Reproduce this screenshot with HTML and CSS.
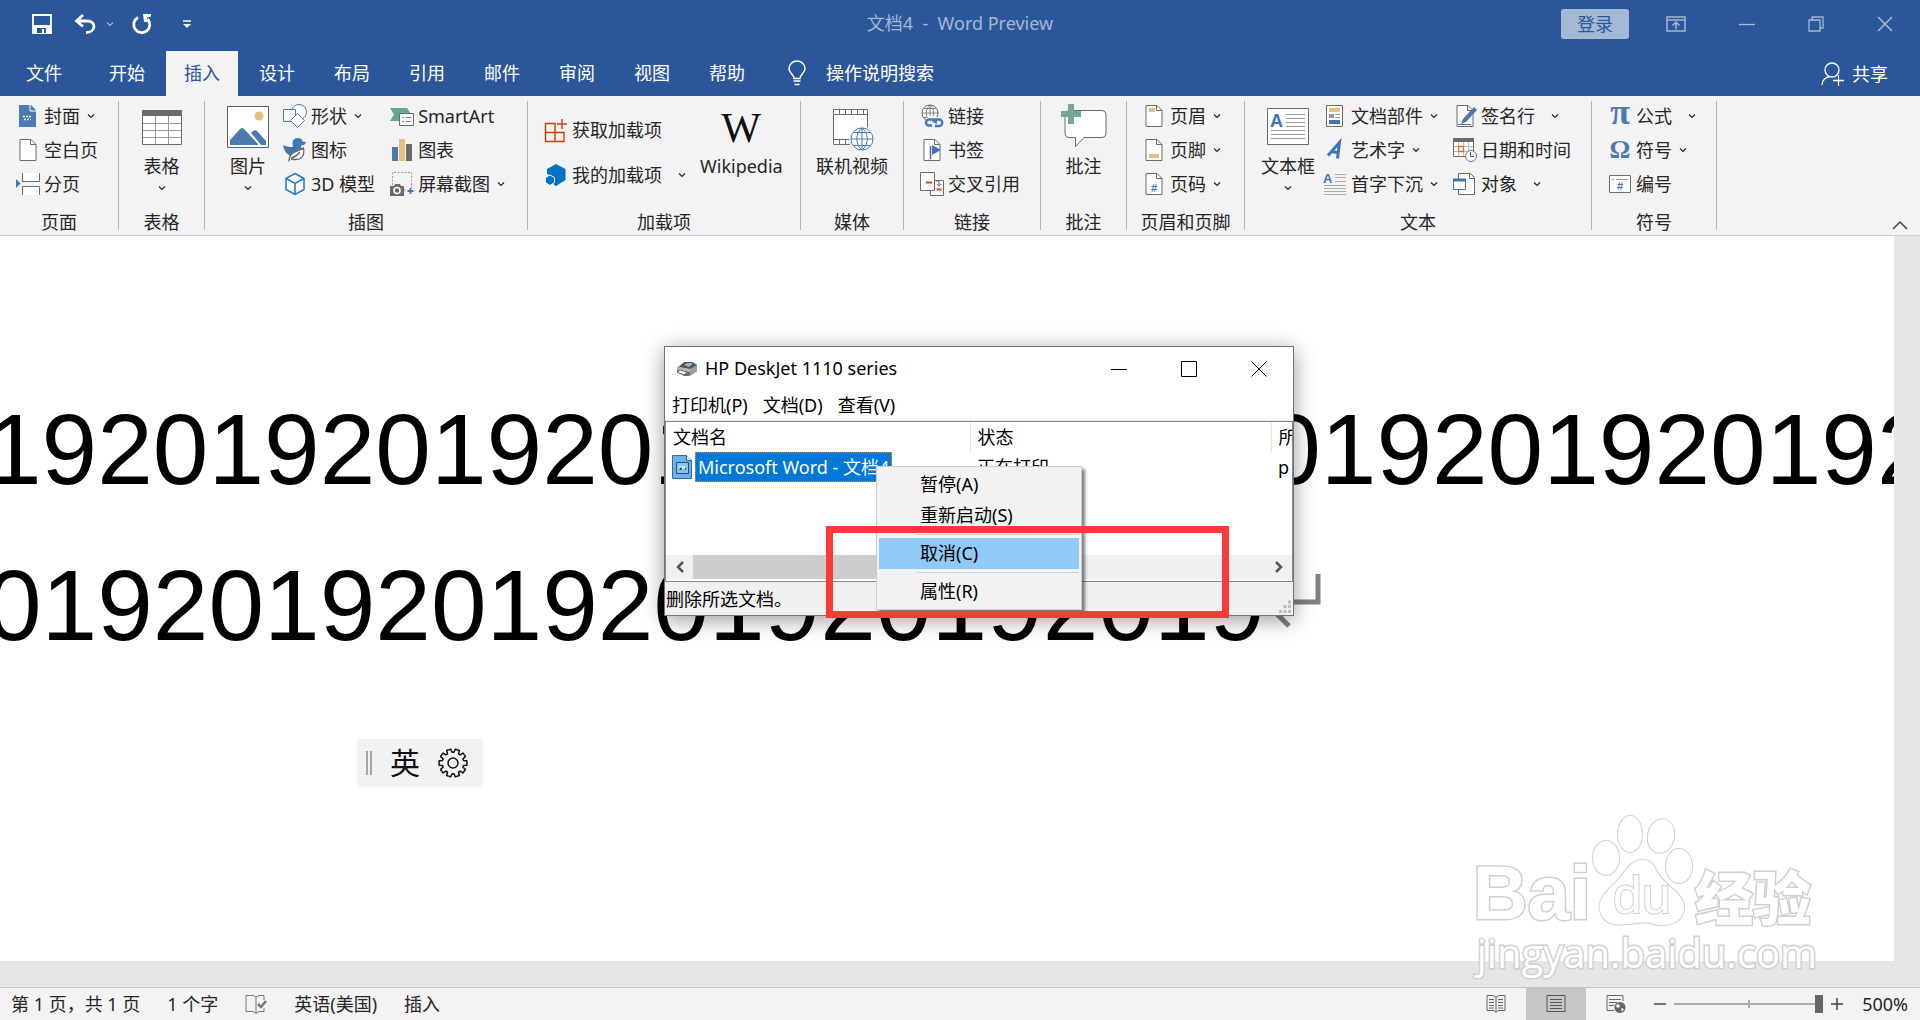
FILE: index.html
```html
<!DOCTYPE html>
<html lang="zh-CN">
<head>
    <meta charset="UTF-8">
    <meta name="viewport" content="width=device-width, initial-scale=1.0">
    <title>文档4 - Word Preview</title>
    <link rel="stylesheet" href="styles.css">
</head>
<body>
    <!-- shared symbols -->
    <svg class="defs" aria-hidden="true">
        <symbol id="chevron" viewBox="0 0 8 6"><path d="M1 1.5l3 3 3-3" fill="none" stroke="currentColor" stroke-width="1.2"/></symbol>
        <symbol id="page" viewBox="0 0 24 24"><path d="M4 1.5h11l5 5v16H4z" fill="#fff" stroke="#6b6b6b"/><path d="M14.500 1.500v5h5.500" fill="none" stroke="#6b6b6b"/></symbol>
        <symbol id="cog" viewBox="0 0 30 30"><path d="M10.670 1.690L12.800 1.170 14.040 4.300H15.960L17.200 1.170 19.330 1.690" fill="none" stroke="#111" stroke-width="1.500" stroke-linejoin="round"/></symbol>
    </svg>

    <header class="titlebar">
        <div class="quick-access">
            <button class="qa save" aria-label="保存"><svg width="20" height="20" viewBox="0 0 20 20"><path d="M1 1h18v18H1z" fill="none" stroke="#fff" stroke-width="1.800"/><path d="M1 11h18v8H1z" fill="#fff"/><path d="M5 14h9v5h-2v-4h-2v4H5z" fill="#2b579a"/></svg></button>
            <button class="qa undo" aria-label="撤消"><svg width="22" height="20" viewBox="0 0 22 20"><path d="M9 1L2.500 7 9 12.500M3 7h10c10 0 9 11.500-1 11.500" fill="none" stroke="#fff" stroke-width="2.800"/></svg></button>
            <button class="qa undo-more" aria-label="撤消列表"><svg width="8" height="6"><use href="#chevron"/></svg></button>
            <button class="qa redo" aria-label="重复"><svg width="20" height="20" viewBox="0 0 20 20"><path d="M6 3.500a8 8 0 1 0 9.500 1.500" fill="none" stroke="#fff" stroke-width="2.800"/><path d="M11 0h8v2.500l-4 1V8h-3z" fill="#fff"/></svg></button>
            <button class="qa more" aria-label="自定义快速访问工具栏"><svg width="8" height="8" viewBox="0 0 8 8"><path d="M0 1h8" stroke="#fff" stroke-width="1.500"/><path d="M0 4h8L4 8z" fill="#fff"/></svg></button>
        </div>
        <h1 class="doc-title">文档4&nbsp; -&nbsp; Word Preview</h1>
        <div class="window-controls">
            <button class="sign-in">登录</button>
            <button class="wc" aria-label="功能区显示选项"><svg width="20" height="16" viewBox="0 0 20 16"><path d="M1 1h18v14H1zM1 4h18M10 13.500V6.500M6.500 9.500L10 6l3.500 3.500" fill="none" stroke="currentColor" stroke-width="1.500"/></svg></button>
            <button class="wc" aria-label="最小化"><svg width="16" height="16"><path d="M0 8.500h16" stroke="currentColor" stroke-width="1.300"/></svg></button>
            <button class="wc" aria-label="还原"><svg width="16" height="16"><path d="M1 4h11v11H1zM4 4V1h11v11h-3" fill="none" stroke="currentColor" stroke-width="1.300"/></svg></button>
            <button class="wc" aria-label="关闭"><svg width="16" height="16"><path d="M1 1l14 14M15 1L1 15" stroke="currentColor" stroke-width="1.500"/></svg></button>
        </div>
    </header>

    <nav class="tabs">
        <button class="tab file">文件</button>
        <button class="tab">开始</button>
        <button class="tab active">插入</button>
        <button class="tab">设计</button>
        <button class="tab">布局</button>
        <button class="tab">引用</button>
        <button class="tab">邮件</button>
        <button class="tab">审阅</button>
        <button class="tab">视图</button>
        <button class="tab">帮助</button>
        <label class="tell-me">
            <svg width="18" height="26" viewBox="0 0 18 26"><path d="M6 18.500c0-4-5-5-5-10a8 7.500 0 0 1 16 0c0 5-5 6-5 10z" fill="none" stroke="#fff" stroke-width="1.500"/><path d="M5.500 21h7M6.500 24.500h5" stroke="#fff" stroke-width="1.600"/></svg>
            <input type="text" placeholder="操作说明搜索" aria-label="操作说明搜索">
        </label>
        <button class="share">
            <svg width="24" height="24" viewBox="0 0 24 24"><circle cx="11" cy="8" r="7" fill="none" stroke="#fff" stroke-width="1.300"/><path d="M1 23c0-5 4-8 8-8.500M12 18.500h11M17.500 13v11" fill="none" stroke="#fff" stroke-width="1.300"/></svg>
            共享
        </button>
    </nav>

    <section class="ribbon">
        <div class="group pages">
            <div class="tools">
                <div class="column">
                    <button class="tool"><svg width="24" height="24"><path d="M3 1h12l5 5v17H3z" fill="#4a7ab0"/><path d="M14 1v6h6" fill="none" stroke="#fff"/><path d="M7 12.500h9M8 15.500h7" stroke="#fff" stroke-width="1.500" stroke-dasharray="2 1"/></svg>封面<svg class="arrow"><use href="#chevron"/></svg></button>
                    <button class="tool"><svg width="24" height="24"><use href="#page"/></svg>空白页</button>
                    <button class="tool"><svg width="24" height="24"><path d="M6.500 1v8.500h17V1M6.500 23v-8.500h17V23" fill="#fff" stroke="#6b6b6b"/><path d="M0 7l4.500 4.500L0 16z" fill="#3f74b5"/></svg>分页</button>
                </div>
            </div>
            <div class="caption">页面</div>
        </div>
        <div class="group table-group">
            <div class="tools">
                <button class="big"><svg width="44" height="44"><path d="M2.500 5.500h39v34h-39z" fill="#fff" stroke="#6b6b6b"/><path d="M2 5h40v6H2z" fill="#6b6b6b"/><path d="M3 18.500h38M3 25.500h38M3 32.500h38M15.500 11v28M28.500 11v28" stroke="#999"/></svg><span>表格</span><svg class="arrow"><use href="#chevron"/></svg></button>
            </div>
            <div class="caption">表格</div>
        </div>
        <div class="group illustrations">
            <div class="tools">
                <button class="big"><svg width="44" height="44"><path d="M1.500 1.500h41v41h-41z" fill="#fff" stroke="#5f5f5f"/><circle cx="33" cy="11" r="4.500" fill="#e8c07d"/><path d="M4 40V35L14 24q2-2 4 0l14 15v1z" fill="#4a7ab0"/><path d="M25 28l2-2q2-1.500 4 0l9 10v4h-5z" fill="#4a7ab0"/></svg><span>图片</span><svg class="arrow"><use href="#chevron"/></svg></button>
                <div class="column shapes">
                    <button class="tool"><svg width="24" height="24"><circle cx="16" cy="8" r="7.500" fill="#fff" stroke="#4a7ab0"/><path d="M.5 5.500h12v12H.5z" fill="#fff" stroke="#4a7ab0"/><path d="M14.500 9.500l7 7-7 7-7-7z" fill="#fff" stroke="#4a7ab0"/></svg>形状<svg class="arrow"><use href="#chevron"/></svg></button>
                    <button class="tool"><svg width="24" height="24"><path d="M0 7q6 3 10 1.500Q8 0 15 0q4 0 4.500 3.500L23 4q-1 3.500-5 3.500 0 3 3 4L10 19Q1 16 0 7z" fill="#4079b0"/><path d="M6 23.500c0-11 9-9 14.500-13.500C22 19 18 23 8 21M8 20q5-1 9-6" fill="#fff" stroke="#6b6b6b" stroke-width="1.300"/></svg>图标</button>
                    <button class="tool"><svg width="24" height="24"><path d="M12 1.500l9 5v11l-9 5-9-5v-11zM3 6.500l9 5 9-5M12 11.500v11" fill="#fff" stroke="#1f78c8" stroke-width="1.500"/></svg>3D 模型</button>
                </div>
                <div class="column charts">
                    <button class="tool"><svg width="24" height="24"><path d="M0 4h17l4 6-4 7H0l4-6.500z" fill="#69a593"/><path d="M9.500 9.500h14v12h-14z" fill="#fff" stroke="#6b6b6b"/><path d="M12 13.500h2M15.500 13.500h6M12 17.500h2M15.500 17.500h6" stroke="#888"/></svg>SmartArt</button>
                    <button class="tool"><svg width="24" height="24"><path d="M2 9h6v14H2z" fill="#4a7ab0"/><path d="M9 1h6v22H9z" fill="#e8c07d"/><path d="M16 6h6v17h-6z" fill="#6b6b6b"/></svg>图表</button>
                    <button class="tool"><svg width="24" height="24"><path d="M2.500 13V.5h19V16M14 18h3" fill="none" stroke="#999" stroke-dasharray="2 1.500"/><path d="M0 14h4l1-2h5l1 2h3v10H0z" fill="#6b6b6b"/><circle cx="7" cy="18.500" r="3" fill="#6b6b6b" stroke="#fff" stroke-width="1.500"/><path d="M17.500 19h6M20.500 16v6" stroke="#3f74b5" stroke-width="1.800"/></svg>屏幕截图<svg class="arrow"><use href="#chevron"/></svg></button>
                </div>
            </div>
            <div class="caption">插图</div>
        </div>
        <div class="group addins">
            <div class="tools">
                <div class="column spaced">
                    <button class="tool"><svg width="24" height="24"><path d="M1.500 5.500h9.500v18H1.500zM1.500 14.500h18.500v9H1.500M20 23.500V14.500M13 6h10M18 1v10" fill="none" stroke="#d83b01" stroke-width="1.400"/></svg>获取加载项</button>
                    <button class="tool"><svg width="24" height="24"><path d="M12 1l9.500 5v11L12 23l-2-1V14L3 11V6z" fill="#0072c6"/><path d="M6 12l4.500 2.500v5L6 22.500l-4.500-3v-5z" fill="#0072c6" stroke="#f3f3f3"/></svg>我的加载项<svg class="arrow wide"><use href="#chevron"/></svg></button>
                </div>
                <button class="big wiki"><svg width="44" height="44"><text x="22" y="37" text-anchor="middle" class="wiki-w">W</text></svg><span>Wikipedia</span></button>
            </div>
            <div class="caption">加载项</div>
        </div>
        <div class="group media">
            <div class="tools">
                <button class="big"><svg width="44" height="44"><path d="M3.500 4.500h34v35h-34z" fill="#fff" stroke="#6b6b6b"/><path d="M3 9.500h35M3 34.500h18M9.500 5v4M15.500 5v4M21.500 5v4M27.500 5v4M33.500 5v4M9.500 35v4M15.500 35v4M20.500 35v4" stroke="#6b6b6b"/><circle cx="32" cy="34" r="13" fill="#f3f3f3"/><circle cx="32" cy="34" r="11" fill="#fff" stroke="#4a7ab0"/><path d="M21 34h22M32 23v22M24 27.500h16M24 40.500h16M32 23c-7 5-7 17 0 22M32 23c7 5 7 17 0 22" fill="none" stroke="#4a7ab0"/></svg><span>联机视频</span></button>
            </div>
            <div class="caption">媒体</div>
        </div>
        <div class="group links">
            <div class="tools">
                <div class="column">
                    <button class="tool"><svg width="24" height="24"><circle cx="10" cy="9" r="8" fill="#fff" stroke="#6b6b6b"/><path d="M2 9h16M10 1v16M4 4.500h12M4 13.500h12M10 1c-5 4-5 12 0 16M10 1c5 4 5 12 0 16" fill="none" stroke="#6b6b6b" stroke-width=".8"/><path d="M12 21h-2a3.500 3.500 0 0 1 0-6.500h4q3 1 2 4M14 20q-1-4 2-4.500h3a3.500 3.500 0 0 1 0 6.500h-3" fill="none" stroke="#f3f3f3" stroke-width="5"/><path d="M12 21.500h-3a3 3 0 0 1 0-6h5q3 1 1.500 4M13.500 18.500q0-2.500 2.500-3h3a3 3 0 0 1 0 6.500h-4" fill="none" stroke="#4a7ab0" stroke-width="2.400"/></svg>链接</button>
                    <button class="tool"><svg width="24" height="24"><use href="#page"/><path d="M10.500 8v13" stroke="#6b6b6b" stroke-width="1.500"/><path d="M12 7l9 5-9 5z" fill="#3f74b5"/></svg>书签</button>
                    <button class="tool"><svg width="24" height="24"><path d="M10.500 8.500h13v15h-13z" fill="#fff" stroke="#6b6b6b"/><path d="M.5.500h14v18H.5z" fill="#fff" stroke="#6b6b6b"/><path d="M6 10.500h6M16.500 17.500h5" stroke="#d24726" stroke-width="2"/><path d="M16 9h3v5M17 12l2 2 2-2" fill="none" stroke="#6b6b6b"/></svg>交叉引用</button>
                </div>
            </div>
            <div class="caption">链接</div>
        </div>
        <div class="group comments">
            <div class="tools">
                <button class="big"><svg width="48" height="44"><path d="M8 5.500h34q4 0 4 4v19q0 4-4 4H24l-8.500 9v-9H9q-4 0-4-4V8z" fill="#fff" stroke="#6b6b6b"/><path d="M8-1h6v7h7v6h-7v7H8v-7H1V6h7z" fill="#74a796"/></svg><span>批注</span></button>
            </div>
            <div class="caption">批注</div>
        </div>
        <div class="group headers">
            <div class="tools">
                <div class="column">
                    <button class="tool"><svg width="24" height="24"><use href="#page"/><path d="M7 4h6v4H7z" fill="#e8c07d"/></svg>页眉<svg class="arrow"><use href="#chevron"/></svg></button>
                    <button class="tool"><svg width="24" height="24"><use href="#page"/><path d="M7 16h10v4H7z" fill="#e8c07d"/></svg>页脚<svg class="arrow"><use href="#chevron"/></svg></button>
                    <button class="tool"><svg width="24" height="24"><use href="#page"/><text x="12" y="20" text-anchor="middle" class="glyph-hash">#</text></svg>页码<svg class="arrow"><use href="#chevron"/></svg></button>
                </div>
            </div>
            <div class="caption">页眉和页脚</div>
        </div>
        <div class="group text-group">
            <div class="tools">
                <button class="big"><svg width="44" height="44"><path d="M1.500 3.500h41v36h-41z" fill="#fff" stroke="#6b6b6b"/><path d="M20 9.500h19M20 13.500h19M20 17.500h19M20 21.500h19M5 25.500h34M5 29.500h34M5 33.500h34" stroke="#999"/><text x="4" y="22" class="glyph-a">A</text></svg><span>文本框</span><svg class="arrow"><use href="#chevron"/></svg></button>
                <div class="column parts">
                    <button class="tool"><svg width="24" height="24"><path d="M3.500 1.500h16v21h-16z" fill="#fff" stroke="#6b6b6b"/><path d="M6 4h11v4H6z" fill="#e8c07d"/><path d="M6 10h5v4H6z" fill="#999"/><path d="M12 10.500h5M12 13.500h5" stroke="#999"/><path d="M6 16h11v4H6z" fill="#3f74b5"/></svg>文档部件<svg class="arrow"><use href="#chevron"/></svg></button>
                    <button class="tool"><svg width="24" height="24"><path d="M5 17.500L16.500 4.500 14.500 20.500M8.500 13.500l8 1.500" fill="none" stroke="#3f74b5" stroke-width="3"/></svg>艺术字<svg class="arrow"><use href="#chevron"/></svg></button>
                    <button class="tool"><svg width="24" height="24"><path d="M12 2.500h11M12 5.500h11M12 9.500h11M1 13.500h22M1 16.500h22M1 19.500h22M1 22.500h22" stroke="#aaa"/><text x="0" y="11" class="glyph-drop">A</text></svg>首字下沉<svg class="arrow"><use href="#chevron"/></svg></button>
                </div>
                <div class="column objects">
                    <button class="tool"><svg width="24" height="24"><use href="#page"/><path d="M5 20.500h13" stroke="#3f74b5"/><path d="M8 20l2-5L21 3l3 3-11 12z" fill="#4a7ab0"/></svg>签名行<svg class="arrow wide"><use href="#chevron"/></svg></button>
                    <button class="tool"><svg width="24" height="24"><path d="M.5 1.500h20v17H.5z" fill="#fff" stroke="#6b6b6b"/><path d="M0 0h21v4H0z" fill="#6b6b6b"/><path d="M5.500 4v14M10.500 4v14M15.500 4v14M1 8.500h19M1 13.500h19" stroke="#bbb"/><path d="M5.500 8.500h5v5h-5z" fill="#fff" stroke="#e07020" stroke-width="1.300"/><circle cx="18" cy="18" r="5.500" fill="#fff" stroke="#4a7ab0"/><path d="M17.500 14v4.500H21" fill="none" stroke="#555"/></svg>日期和时间</button>
                    <button class="tool"><svg width="24" height="24"><path d="M5.500 1.500h12l4 4v17h-16z" fill="#fff" stroke="#6b6b6b"/><path d="M16.500 1.500v5h5" fill="none" stroke="#6b6b6b"/><path d="M.5 7.500h12v10H.5z" fill="#fff" stroke="#3f74b5"/><path d="M0 6.500h13v3H0z" fill="#3f74b5"/></svg>对象<svg class="arrow wide"><use href="#chevron"/></svg></button>
                </div>
            </div>
            <div class="caption">文本</div>
        </div>
        <div class="group symbols">
            <div class="tools">
                <div class="column">
                    <button class="tool"><svg width="24" height="24"><text x="12" y="20" text-anchor="middle" class="glyph-sym">π</text></svg>公式<svg class="arrow wide"><use href="#chevron"/></svg></button>
                    <button class="tool"><svg width="24" height="24"><text x="12" y="20" text-anchor="middle" class="glyph-sym omega">Ω</text></svg>符号<svg class="arrow"><use href="#chevron"/></svg></button>
                    <button class="tool"><svg width="24" height="24"><path d="M1.500 3.500h21v17h-21z" fill="#fff" stroke="#6b6b6b"/><path d="M4 7.500h2M8 7.500h12" stroke="#999"/><text x="12" y="18" text-anchor="middle" class="glyph-hash">#</text></svg>编号</button>
                </div>
            </div>
            <div class="caption">符号</div>
        </div>
        <button class="collapse" aria-label="折叠功能区"><svg width="16" height="10"><path d="M1 9l7-7 7 7" fill="none" stroke="#444" stroke-width="1.500"/></svg></button>
    </section>

    <main class="workspace">
        <article class="paper">
            <p class="line">19201920192019201920192019201920192</p>
            <p class="line">01920192019201920192019</p>
        </article>
        <svg class="return-mark" width="48" height="56"><path d="M43 0v28H4M2 40l12 12M2 28L14 40" fill="none" stroke="#808080" stroke-width="5"/></svg>

        <section class="dialog">
            <header class="dialog-title">
                <svg width="22" height="16" viewBox="0 0 22 16"><path d="M1 7L8 1h8l5 3v6l-8 5H8l-7-4z" fill="#6d7173"/><path d="M3 6l6-5h7l5 3-7 4z" fill="#4b5558"/><path d="M8 4l3-2h4l2 1-4 3z" fill="#8fb4c4"/><path d="M14 8l7-4v6l-7 5z" fill="#9a9d9f"/><path d="M1 7l3-1 10 2v3L1 9z" fill="#b4b8ba"/><path d="M1 11l3-2 7 2-3 3z" fill="#f2f4f5" stroke="#555" stroke-width=".8"/></svg>
                <h2>HP DeskJet 1110 series</h2>
                <button aria-label="最小化"><svg width="16" height="16"><path d="M0 8.500h16" stroke="#000"/></svg></button>
                <button aria-label="最大化"><svg width="16" height="16"><path d="M.5.500h15v15H.5z" fill="none" stroke="#000"/></svg></button>
                <button aria-label="关闭"><svg width="16" height="16"><path d="M.5.500l15 15M15.500.500l-15 15" stroke="#000"/></svg></button>
            </header>
            <nav class="dialog-menu">
                <button>打印机(P)</button>
                <button>文档(D)</button>
                <button>查看(V)</button>
            </nav>
            <div class="queue">
                <table>
                    <thead>
                        <tr><th class="col-name">文档名</th><th class="col-state">状态</th><th>所</th></tr>
                    </thead>
                    <tbody>
                        <tr>
                            <td><div class="job"><svg width="20" height="24"><path d="M.5.500h14l5 5v18H.5z" fill="#6cb0e6" stroke="#2c6da3"/><path d="M14.500.500v5h5" fill="#d6ecfb" stroke="#2c6da3"/><path d="M4.500 7.500h12v11h-12z" fill="#8cc4ee" stroke="#1d5383"/><path d="M7 11h7v4H7z" fill="#cfe6f5"/><path d="M7 15q2-5 3-1t4-2v3z" fill="#1d5383"/></svg><span>Microsoft Word - 文档4</span></div></td>
                            <td>正在打印</td>
                            <td>p</td>
                        </tr>
                    </tbody>
                </table>
                <div class="scrollbar">
                    <button aria-label="向左"><svg width="10" height="12"><path d="M8 1L3 6l5 5" fill="none" stroke="#555" stroke-width="2.500"/></svg></button>
                    <div class="thumb"></div>
                    <button aria-label="向右"><svg width="10" height="12"><path d="M2 1l5 5-5 5" fill="none" stroke="#555" stroke-width="2.500"/></svg></button>
                </div>
            </div>
            <footer class="dialog-status">
                <span>删除所选文档。</span>
                <svg class="grip" width="12" height="12"><path d="M9 1h3M9 5.500h3M9 10.500h3M4.500 5.500h3M4.500 10.500h3M0 10.500h3" stroke="#bcbcbc" stroke-width="3"/></svg>
            </footer>
        </section>

        <div class="context-menu" role="menu">
            <button role="menuitem">暂停(A)</button>
            <button role="menuitem">重新启动(S)</button>
            <hr>
            <button role="menuitem" class="selected">取消(C)</button>
            <hr>
            <button role="menuitem">属性(R)</button>
        </div>
        <div class="highlight"></div>

        <div class="ime">
            <i class="ime-grip"></i>
            <button>英</button>
            <button aria-label="设置"><svg width="30" height="30" viewBox="0 0 30 30">
                <circle cx="15" cy="15" r="5" fill="none" stroke="#111" stroke-width="1.500"/>
                <use href="#cog"/>
                <use href="#cog" transform="rotate(36 15 15)"/>
                <use href="#cog" transform="rotate(72 15 15)"/>
                <use href="#cog" transform="rotate(108 15 15)"/>
                <use href="#cog" transform="rotate(144 15 15)"/>
                <use href="#cog" transform="rotate(180 15 15)"/>
                <use href="#cog" transform="rotate(216 15 15)"/>
                <use href="#cog" transform="rotate(252 15 15)"/>
                <use href="#cog" transform="rotate(288 15 15)"/>
                <use href="#cog" transform="rotate(324 15 15)"/>
            </svg></button>
        </div>

        <div class="watermark">
            <div class="brand">
                <span class="bai">Bai</span>
                <svg width="96" height="112" viewBox="0 0 96 112">
                    <g fill="#fff" stroke="#d0d0d0" stroke-width="2">
                        <ellipse cx="15" cy="44" rx="13" ry="17"/>
                        <ellipse cx="39" cy="20" rx="12" ry="18"/>
                        <ellipse cx="70" cy="22" rx="13" ry="17" transform="rotate(12 70 22)"/>
                        <ellipse cx="88" cy="52" rx="13" ry="17"/>
                        <path d="M52 46c-14 0-18 14-28 23S6 88 9 97c4 15 18 14 28 13s16-3 26 0 28 1 30-15c1-12-10-18-20-28S64 46 52 46z"/>
                    </g>
                    <text x="51" y="99" text-anchor="middle" class="du">du</text>
                </svg>
                <span class="jingyan">经验</span>
            </div>
            <div class="site">jingyan.baidu.com</div>
        </div>
    </main>

    <footer class="statusbar">
        <span>第 1 页，共 1 页</span>
        <span>1 个字</span>
        <button aria-label="校对"><svg width="22" height="20"><path d="M11 3L8 1.500H1v16h7l3 2 3-2h5V14M11 3v16M11 3l3-1.500h5V6" fill="none" stroke="#777"/><path d="M13 10l3 3 5-6" fill="none" stroke="#777" stroke-width="2.500"/></svg></button>
        <span>英语(美国)</span>
        <span>插入</span>
        <div class="status-right">
            <div class="views">
                <button aria-label="阅读视图"><svg width="20" height="20"><path d="M10 3L7 1.500H1v15h7l2 2 2-2h7v-15h-6zM10 3v15" fill="none" stroke="#666"/><path d="M3 5.500h5M3 8.500h5M3 11.500h5M3 14h5M12 5.500h5M12 8.500h5M12 11.500h5M12 14h5" stroke="#666"/></svg></button>
                <button class="active" aria-label="页面视图"><svg width="20" height="20"><path d="M1 1.500h18v16H1z" fill="none" stroke="#555"/><path d="M4 5.500h12M4 8.500h12M4 11.500h12M4 14.500h12" stroke="#555"/></svg></button>
                <button aria-label="Web 版式视图"><svg width="20" height="20"><path d="M8 16.500H1v-15h16V7" fill="none" stroke="#666"/><path d="M3 5.500h12M3 8.500h8M3 11.500h5" stroke="#666"/><circle cx="14" cy="13.500" r="5.500" fill="#666"/><path d="M11 10l3 1-1 3-3-1zM15 14l3 1-2 3z" fill="#f3f3f3"/></svg></button>
            </div>
            <div class="zoom">
                <button aria-label="缩小"><svg width="12" height="12"><path d="M0 6h12" stroke="#444" stroke-width="1.500"/></svg></button>
                <input type="range" min="10" max="500" value="500" aria-label="显示比例">
                <button aria-label="放大"><svg width="12" height="12"><path d="M0 6h12M6 0v12" stroke="#444" stroke-width="1.500"/></svg></button>
                <span>500%</span>
            </div>
        </div>
    </footer>
</body>
</html>
```

FILE: styles.css
```css
:root {
    --blue: #2b579a;
    --ribbon: #f3f3f3;
    --canvas: #e6e6e6;
    --muted: #a5b8d5;
    --text: #262626;
}

* {
    box-sizing: border-box;
    margin: 0;
    padding: 0;
}

body {
    display: flex;
    flex-direction: column;
    height: 100vh;
    overflow: hidden;
    background: var(--canvas);
    color: var(--text);
    font-family: "Noto Sans", "Noto Sans CJK SC", sans-serif;
    font-size: 18px;
    line-height: 24px;
}

button,
input {
    border: none;
    background: none;
    color: inherit;
    font: inherit;
}

svg {
    display: block;
    flex: none;
    overflow: visible;
}

.defs {
    position: absolute;
    width: 0;
    height: 0;
}

/* title bar */
.titlebar {
    display: grid;
    grid-template-columns: 1fr auto 1fr;
    align-items: center;
    height: 51px;
    padding-bottom: 4px;
    background: var(--blue);
    color: var(--muted);
}

.quick-access {
    display: flex;
    align-items: center;
    padding-left: 32px;
}

.save { margin-right: 22px; }
.undo { margin-right: 10px; }
.undo-more { margin-right: 18px; }
.redo { margin-right: 31px; }

.doc-title {
    padding-bottom: 2px;
    font-size: 18px;
    font-weight: 400;
}

.window-controls {
    display: flex;
    align-items: center;
    justify-content: flex-end;
    gap: 53px;
    padding-right: 27px;
}

.sign-in {
    width: 68px;
    height: 30px;
    margin-right: -16px;
    border-radius: 3px;
    background: var(--muted);
    color: var(--blue);
}

/* tabs */
.tabs {
    display: flex;
    align-items: stretch;
    gap: 3px;
    height: 45px;
    padding-left: 8px;
    background: var(--blue);
    color: #fff;
}

.tab {
    padding: 0 18px 2px;
}

.tab.file {
    margin-right: 8px;
}

.tab.active {
    background: var(--ribbon);
    color: var(--blue);
}

.tell-me {
    display: flex;
    align-items: center;
    gap: 20px;
    margin-left: 22px;
    padding-bottom: 2px;
}

.tell-me input {
    width: 120px;
    outline: none;
}

.tell-me input::placeholder {
    color: #fff;
}

.share {
    display: flex;
    align-items: center;
    gap: 7px;
    margin-left: auto;
    padding-right: 32px;
}

/* ribbon */
.ribbon {
    display: flex;
    height: 140px;
    padding: 5px 0;
    border-bottom: 1px solid #d2d2d2;
    background: var(--ribbon);
}

.group {
    display: flex;
    flex-direction: column;
    height: 129px;
    border-right: 1px solid #b4b4b4;
}

.tools {
    display: flex;
    flex: 1;
    align-items: flex-start;
}

.caption {
    line-height: 16px;
    text-align: center;
    white-space: nowrap;
}

.column {
    display: flex;
    flex-direction: column;
    gap: 4px;
}

.column.spaced {
    gap: 15px;
    padding-top: 14px;
}

.tool {
    display: flex;
    align-items: center;
    gap: 4px;
    height: 30px;
    white-space: nowrap;
}

.arrow {
    width: 8px;
    height: 6px;
    margin-left: 3px;
}

.arrow.wide {
    margin-left: 12px;
}

.big {
    display: flex;
    flex-direction: column;
    align-items: center;
    gap: 5px;
    padding-top: 4px;
    white-space: nowrap;
}

.big .arrow {
    margin: 2px 0 0;
}

.pages { min-width: 119px; }
.pages .tools { padding-left: 16px; }
.table-group { min-width: 86px; }
.table-group .tools { justify-content: center; }
.illustrations { min-width: 323px; }
.illustrations .tools { padding-left: 21px; }
.illustrations .shapes { margin-left: 13px; }
.illustrations .charts { margin-left: 15px; }
.addins { min-width: 273px; }
.addins .tools { padding-left: 16px; }
.addins .wiki { margin-left: 14px; }
.media { min-width: 103px; }
.media .tools { justify-content: center; }
.links { min-width: 137px; }
.links .tools { padding-left: 16px; }
.comments { min-width: 86px; }
.comments .tools { justify-content: center; }
.headers { min-width: 118px; }
.headers .tools { padding-left: 15px; }
.text-group { min-width: 347px; }
.text-group .tools { padding-left: 16px; }
.text-group .parts { margin-left: 8px; }
.text-group .objects { margin-left: 15px; }
.symbols { min-width: 125px; }
.symbols .tools { padding-left: 16px; }

.collapse {
    align-self: flex-end;
    margin-left: auto;
    padding: 0 12px;
}

.wiki-w {
    font: 42px "Liberation Serif", serif;
    fill: #111;
}

.glyph-a {
    font: bold 18px "Liberation Sans", sans-serif;
    fill: #3f74b5;
}

.glyph-drop {
    font: bold 13px "Liberation Sans", sans-serif;
    fill: #3f74b5;
}

.glyph-hash {
    font: bold 11px "Liberation Sans", sans-serif;
    fill: #3f74b5;
}

.glyph-sym {
    font: bold 36px "Liberation Serif", serif;
    fill: #4a7ab0;
}

.glyph-sym.omega {
    font-size: 26px;
}

/* document */
.workspace {
    position: relative;
    flex: 1;
    padding: 0 26px 26px 0;
    overflow: hidden;
}

.paper {
    height: 100%;
    padding-top: 135px;
    overflow: hidden;
    background: #fff;
    color: #000;
}

.line {
    margin-left: -14px;
    font: 100px/156px "Liberation Sans", sans-serif;
    white-space: nowrap;
}

.return-mark {
    position: absolute;
    top: 338px;
    left: 1275px;
}

/* print queue window */
.dialog {
    position: absolute;
    top: 110px;
    left: 664px;
    display: flex;
    flex-direction: column;
    width: 630px;
    height: 270px;
    border: 1px solid #6f7378;
    background: #fff;
    box-shadow: 0 4px 20px rgba(0, 0, 0, 0.4);
    color: #000;
}

.dialog-title {
    display: flex;
    align-items: center;
    height: 43px;
    padding: 0 26px 0 11px;
}

.dialog-title h2 {
    flex: 1;
    margin-left: 7px;
    padding-bottom: 2px;
    font-size: 18px;
    font-weight: 400;
}

.dialog-title button + button {
    margin-left: 54px;
}

.dialog-menu {
    display: flex;
    gap: 15px;
    height: 31px;
    padding-left: 7px;
    border-bottom: 1px solid #f0f0f0;
}

.queue {
    display: flex;
    flex-direction: column;
    height: 161px;
    border: 1px solid #828790;
    overflow: hidden;
}

.queue table {
    width: 100%;
    border-collapse: collapse;
    table-layout: fixed;
}

.queue th,
.queue td {
    height: 30px;
    padding-left: 7px;
    overflow: hidden;
    font-weight: 400;
    text-align: left;
    white-space: nowrap;
}

.queue th {
    border-right: 1px solid #e3e3e3;
}

.queue th:last-child {
    border-right: none;
}

.queue td:first-child {
    padding-left: 6px;
}

.col-name { width: 304px; }
.col-state { width: 301px; }

.job {
    display: flex;
    align-items: center;
    gap: 3px;
}

.job span {
    padding: 0 2px;
    border: 1px dotted #ff8728;
    background: #0078d7;
    color: #fff;
    line-height: 28px;
}

.scrollbar {
    display: flex;
    align-items: center;
    height: 24px;
    margin-top: auto;
    margin-bottom: 2px;
    background: #f0f0f0;
}

.scrollbar button {
    display: flex;
    justify-content: center;
    width: 27px;
}

.scrollbar .thumb {
    width: 240px;
    height: 24px;
    margin-right: auto;
    background: #cdcdcd;
}

.dialog-status {
    display: flex;
    flex: 1;
    align-items: center;
    justify-content: space-between;
    padding: 2px 2px 2px 1px;
    background: #f0f0f0;
}

.grip {
    align-self: flex-end;
}

.context-menu {
    position: absolute;
    top: 230px;
    left: 876px;
    width: 206px;
    padding: 2px;
    border: 1px solid #cccccc;
    background: #f2f2f2;
    box-shadow: 3px 3px 3px rgba(0, 0, 0, 0.5);
    color: #000;
}

.context-menu button {
    display: block;
    width: 100%;
    padding-left: 41px;
    line-height: 31px;
    text-align: left;
}

.context-menu .selected {
    background: #91c9f7;
}

.context-menu hr {
    margin: 3px 0 3px 37px;
    border: none;
    border-top: 1px solid #d0d0d0;
}

.highlight {
    position: absolute;
    top: 290px;
    left: 826px;
    width: 403px;
    height: 92px;
    border: 7px solid #fb3a3a;
    pointer-events: none;
}

/* input method bar */
.ime {
    position: absolute;
    top: 503px;
    left: 357px;
    display: flex;
    align-items: center;
    gap: 18px;
    height: 48px;
    padding: 0 15px 0 9px;
    background: #f2f2f2;
}

.ime-grip {
    width: 6px;
    height: 24px;
    border: solid #a5a5a5;
    border-width: 0 2px;
}

.ime button {
    color: #111;
    font-size: 30px;
}

/* watermark */
.watermark {
    position: absolute;
    right: 103px;
    bottom: 7px;
    color: #fff;
    -webkit-text-stroke: 3px #d0d0d0;
    paint-order: stroke fill;
}

.brand {
    display: flex;
    align-items: flex-end;
    margin-left: -4px;
}

.brand svg {
    margin-right: 8px;
    -webkit-text-stroke: 0;
}

.bai {
    font: bold 76px/66px "Liberation Sans", sans-serif;
}

.jingyan {
    font: 900 58px/62px "Noto Sans CJK SC", sans-serif;
}

.du {
    font: 52px "Liberation Sans", sans-serif;
    fill: #fff;
    stroke: #d0d0d0;
    stroke-width: 2px;
}

.site {
    font-family: "Open Sans", sans-serif;
    font-size: 40px;
    line-height: 54px;
}

/* status bar */
.statusbar {
    display: flex;
    align-items: center;
    gap: 27px;
    height: 33px;
    padding-left: 11px;
    border-top: 1px solid #c6c6c6;
    background: var(--ribbon);
    white-space: nowrap;
}

.status-right {
    display: flex;
    align-self: stretch;
    gap: 8px;
    margin-left: auto;
}

.views {
    display: flex;
}

.views button {
    display: flex;
    align-items: center;
    justify-content: center;
    width: 60px;
}

.views .active {
    background: #c6c6c6;
}

.zoom {
    display: flex;
    align-items: center;
    gap: 8px;
    padding-right: 12px;
}

.zoom span {
    margin-left: 11px;
}

.zoom input {
    width: 149px;
    height: 18px;
    background:
        linear-gradient(#ababab, #ababab) center / 2px 8px no-repeat,
        linear-gradient(#ababab, #ababab) center / 100% 2px no-repeat;
    appearance: none;
}

.zoom input::-webkit-slider-thumb {
    width: 8px;
    height: 18px;
    background: #666;
    appearance: none;
}
```
